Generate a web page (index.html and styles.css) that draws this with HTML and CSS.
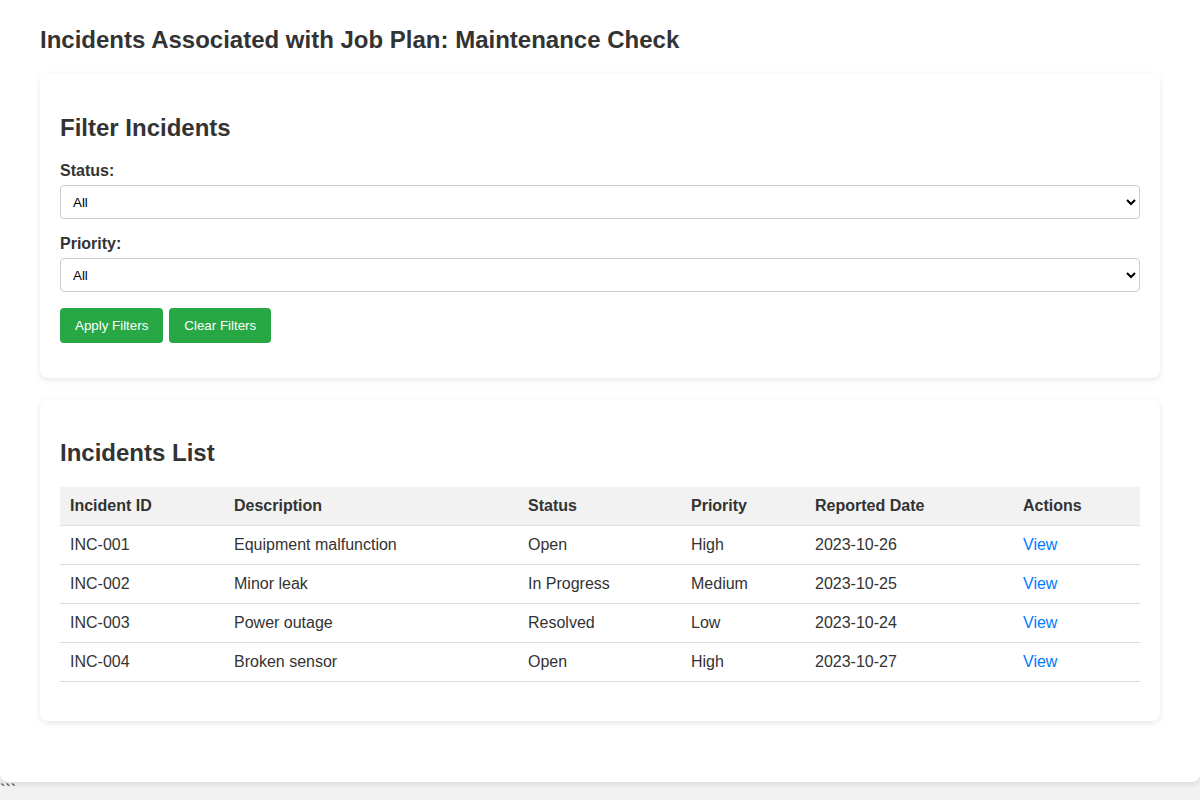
FILE: index.html
```html
<!DOCTYPE html>
<html lang="en">
<head>
<meta charset="utf-8">
<title>Incidents Associated with Job Plan</title>
<link rel="stylesheet" href="styles.css">
</head>
<body>
<div class="container">
  <h1 class="page-title">Incidents Associated with Job Plan: Maintenance Check</h1>

  <section class="card filter-card">
    <h2 class="card-title">Filter Incidents</h2>
    <div class="form-group">
      <label class="field-label" for="status">Status:</label>
      <select id="status" class="field-select">
        <option>All</option>
        <option>Open</option>
        <option>In Progress</option>
        <option>Resolved</option>
      </select>
    </div>
    <div class="form-group">
      <label class="field-label" for="priority">Priority:</label>
      <select id="priority" class="field-select">
        <option>All</option>
        <option>High</option>
        <option>Medium</option>
        <option>Low</option>
      </select>
    </div>
    <div class="button-row">
      <button class="btn">Apply Filters</button>
      <button class="btn">Clear Filters</button>
    </div>
  </section>

  <section class="card list-card">
    <h2 class="card-title">Incidents List</h2>
    <table class="incidents">
      <colgroup>
        <col class="c-id"><col class="c-desc"><col class="c-status"><col class="c-priority"><col class="c-date"><col class="c-actions">
      </colgroup>
      <thead>
        <tr><th>Incident ID</th><th>Description</th><th>Status</th><th>Priority</th><th>Reported Date</th><th>Actions</th></tr>
      </thead>
      <tbody>
        <tr><td>INC-001</td><td>Equipment malfunction</td><td>Open</td><td>High</td><td>2023-10-26</td><td><a class="view-link" href="#">View</a></td></tr>
        <tr><td>INC-002</td><td>Minor leak</td><td>In Progress</td><td>Medium</td><td>2023-10-25</td><td><a class="view-link" href="#">View</a></td></tr>
        <tr><td>INC-003</td><td>Power outage</td><td>Resolved</td><td>Low</td><td>2023-10-24</td><td><a class="view-link" href="#">View</a></td></tr>
        <tr><td>INC-004</td><td>Broken sensor</td><td>Open</td><td>High</td><td>2023-10-27</td><td><a class="view-link" href="#">View</a></td></tr>
      </tbody>
    </table>
  </section>
</div>
<div class="trailing">&#96;&#96;&#96;</div>
</body>
</html>
```

FILE: styles.css
```css
html,
body {
  margin: 0;
  padding: 0;
}
body {
  background: #f2f2f2;
  font-family: "Liberation Sans", Arial, sans-serif;
  font-size: 16px;
  color: #333;
}
.container {
  max-width: 1200px;
  margin: 0 auto;
  background: #fff;
  padding: 26px 40px 40px;
  box-sizing: border-box;
  border-radius: 0 0 8px 8px;
  box-shadow: 0 2px 6px rgba(0, 0, 0, 0.1);
}
.page-title {
  margin: 0 0 20px;
  font-size: 24px;
  line-height: 28px;
  font-weight: bold;
  color: #333;
}
.card {
  background: #fff;
  border-radius: 8px;
  box-shadow: 0 2px 6px rgba(0, 0, 0, 0.1);
  padding: 20px;
  margin-bottom: 21px;
}
.card-title {
  margin: 20px 0 20px;
  font-size: 24px;
  line-height: 28px;
  font-weight: bold;
  color: #333;
}
.form-group {
  margin-bottom: 16px;
}
.field-label {
  display: block;
  font-weight: bold;
  margin-bottom: 5px;
}
.field-select {
  display: block;
  width: 100%;
  height: 34px;
  box-sizing: border-box;
  padding: 8px;
  font-family: "Liberation Sans", Arial, sans-serif;
  font-size: 13.33px;
  color: #000;
  background: #fff;
  border: 1px solid #ccc;
  border-radius: 4px;
}
.button-row {
  display: flex;
  gap: 6px;
  margin-bottom: 15px;
}
.btn {
  background: #28a745;
  color: #fff;
  border: none;
  border-radius: 4px;
  padding: 10px 15px;
  font-family: "Liberation Sans", Arial, sans-serif;
  font-size: 13.33px;
  cursor: pointer;
}
.incidents {
  width: 100%;
  border-collapse: collapse;
  margin-bottom: 19px;
  table-layout: fixed;
}
.c-id { width: 164px; }
.c-desc { width: 294px; }
.c-status { width: 163px; }
.c-priority { width: 124px; }
.c-date { width: 208px; }
.c-actions { width: 127px; }
.incidents th,
.incidents td {
  text-align: left;
  padding: 10px;
  border-bottom: 1px solid #ddd;
  line-height: 18px;
}
.incidents th {
  background: #f2f2f2;
  font-weight: bold;
}
.view-link {
  color: #007bff;
  text-decoration: none;
}
.trailing {
  font-size: 16px;
  line-height: 18px;
  color: #333;
}
```
